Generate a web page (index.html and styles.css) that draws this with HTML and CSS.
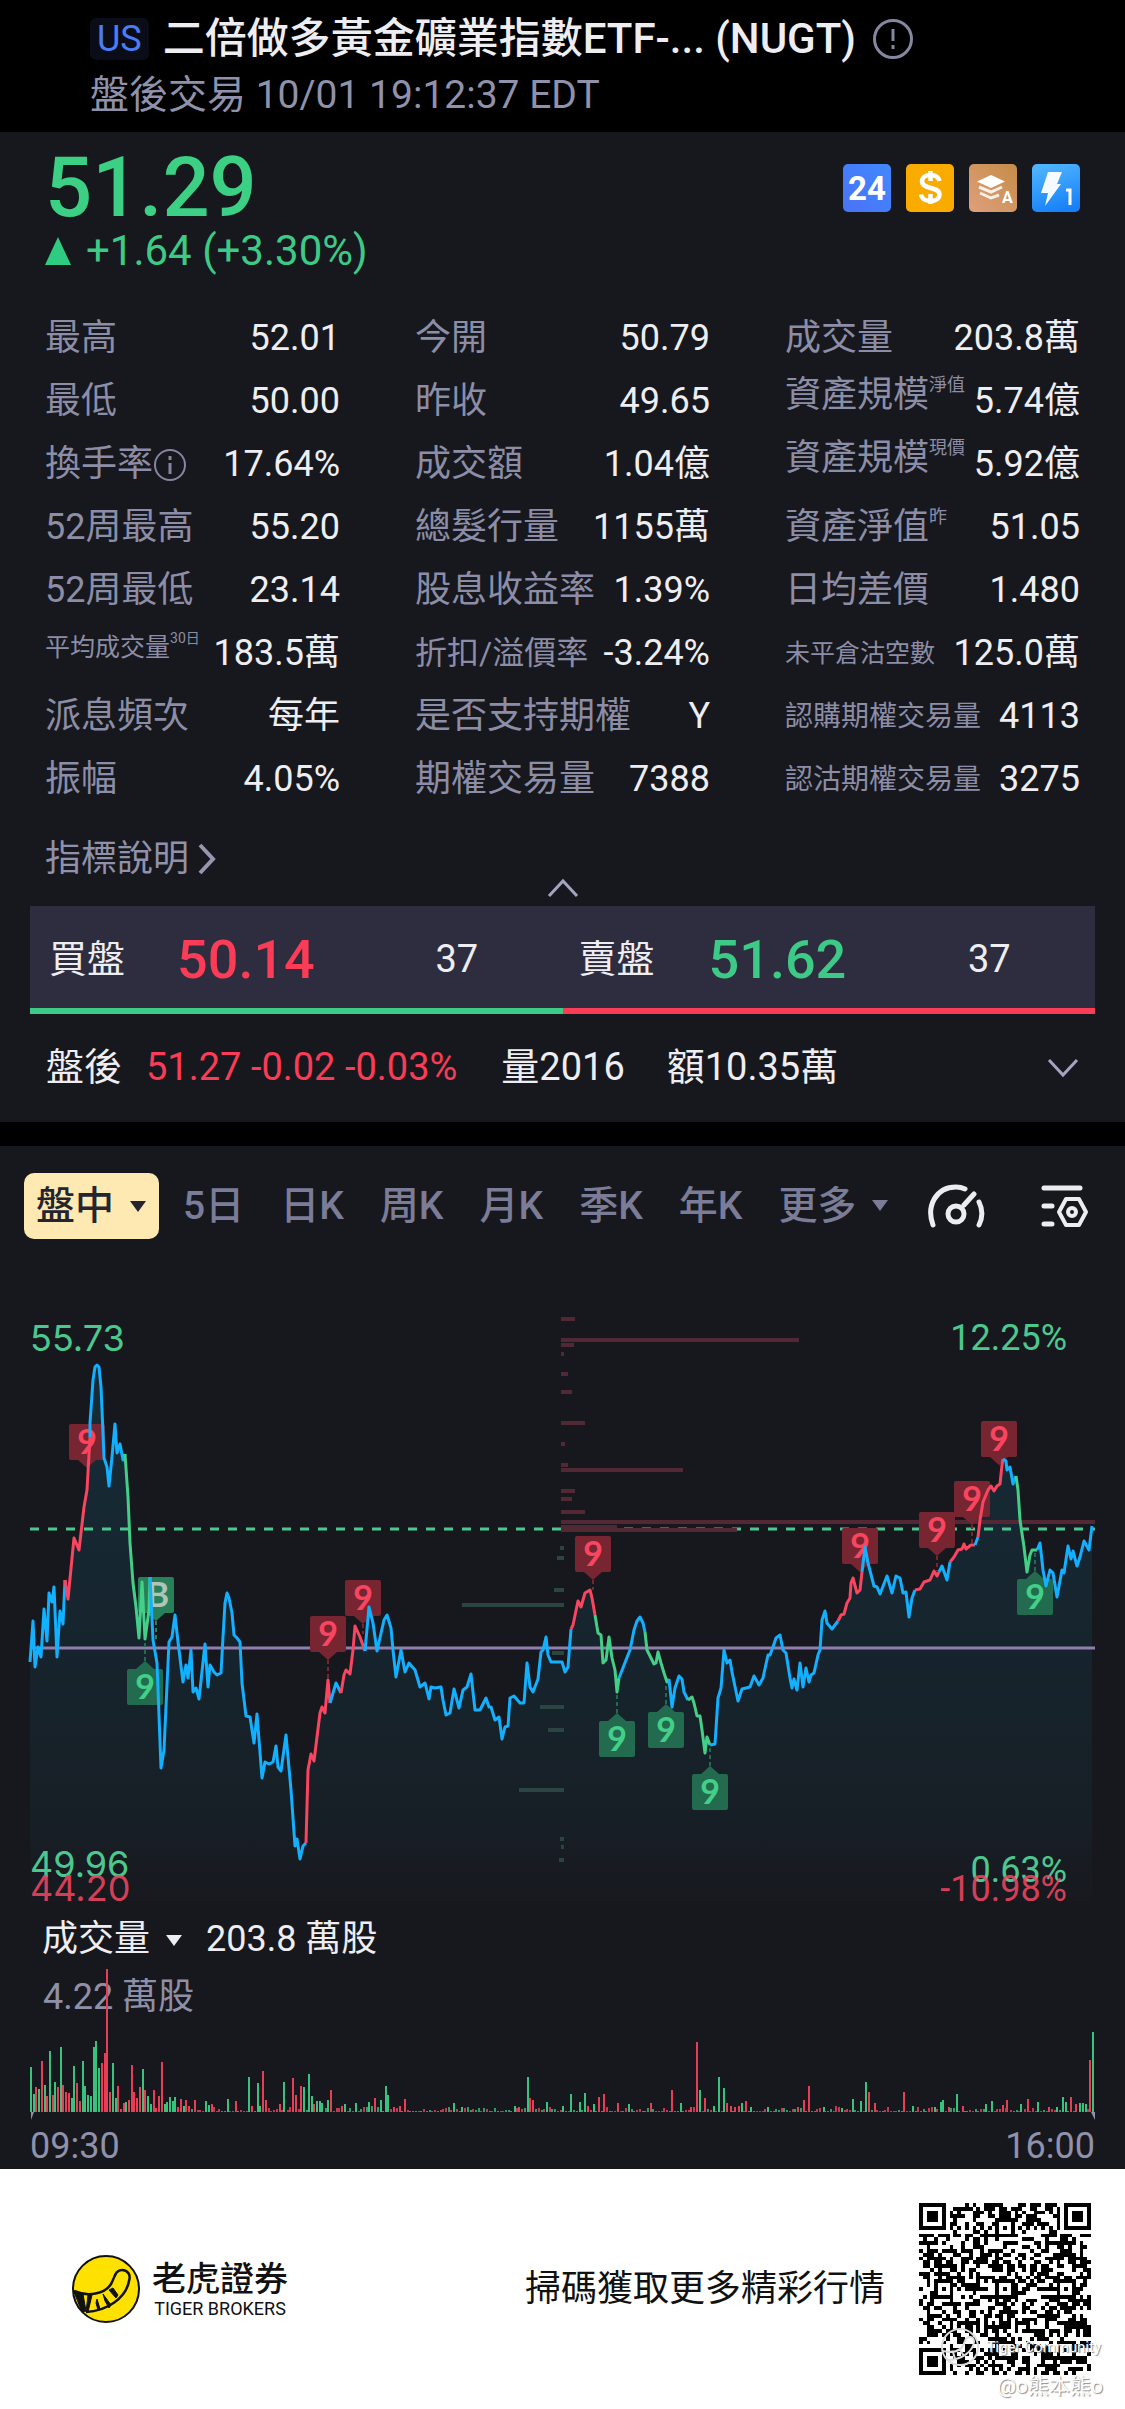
FILE: index.html
```
<!DOCTYPE html>
<html lang="zh-Hant">
<head>
    <meta charset="UTF-8">
    <meta name="viewport" content="width=device-width, initial-scale=1.0">
    <title>NUGT</title>
    <link rel="stylesheet" href="styles.css">
</head>
<body>
    <header class="header">
        <h1 class="title">
            <span class="market">US</span>
            <span>二倍做多黃金礦業指數ETF-... (NUGT)</span>
            <button class="icon-button" aria-label="提示">
                <svg width="42" height="42" viewBox="0 0 42 42" fill="none" stroke="#8586a0" stroke-width="3">
                    <circle cx="21" cy="21" r="18.5"/>
                    <path d="M21 11v12M21 27v4"/>
                </svg>
            </button>
        </h1>
        <p class="session">盤後交易 10/01 19:12:37 EDT</p>
    </header>

    <section class="panel quote">
        <div class="price-row">
            <div>
                <div class="price">51.29</div>
                <div class="change"><svg width="26" height="28" viewBox="0 0 26 28"><path d="M13 0l13 28H0z" fill="#2fcb80"/></svg>+1.64 (+3.30%)</div>
            </div>
            <div class="badges">
                <svg viewBox="0 0 48 48">
                    <defs><linearGradient id="blue" x1="1" y1="0" x2="0" y2="1"><stop offset="0" stop-color="#4089ff"/><stop offset="1" stop-color="#4a72f5"/></linearGradient></defs>
                    <rect width="48" height="48" rx="5" fill="url(#blue)"/>
                    <text x="24" y="36" font-size="33" font-weight="700" text-anchor="middle" fill="#fff">24</text>
                </svg>
                <svg viewBox="0 0 48 48">
                    <rect width="48" height="48" rx="5" fill="#f9ab00"/>
                    <path d="M33.500 17c-1-4-4.500-6-9-6-5 0-8.500 2.500-8.500 6.200 0 9 17.500 4.500 17.500 13.300 0 4-3.700 6.500-9 6.500-5 0-8.800-2.300-9.500-6.500M24.500 7v10M24.500 30v10" fill="none" stroke="#fff" stroke-width="4.500"/>
                </svg>
                <svg viewBox="0 0 48 48">
                    <defs><linearGradient id="tan" x1="1" y1="0" x2="0" y2="1"><stop offset="0" stop-color="#c58c47"/><stop offset="1" stop-color="#df9f7d"/></linearGradient></defs>
                    <rect width="48" height="48" rx="5" fill="url(#tan)"/>
                    <path d="M22 11l14 6.500L22 24 8 17.500z" fill="#fff"/>
                    <path d="M10 23l12 5 11-5M11 29l11 5 8-3" fill="none" stroke="#fff" stroke-width="3" opacity=".85"/>
                    <text x="33" y="39" font-size="16" font-weight="700" fill="#fff">A</text>
                </svg>
                <svg viewBox="0 0 48 48">
                    <defs><linearGradient id="sky" x1=".3" y1="0" x2=".6" y2="1"><stop offset="0" stop-color="#4fb4ff"/><stop offset="1" stop-color="#1680f8"/></linearGradient></defs>
                    <rect width="48" height="48" rx="5" fill="url(#sky)"/>
                    <path d="M16 8h14l-5 12h4L13 42l3-13H9z" fill="#fff" opacity=".95"/>
                    <path d="M34 26h4v15" fill="none" stroke="#fff" stroke-width="3"/>
                </svg>
            </div>
        </div>

        <div class="stats">
            <dl>
                <div><dt>最高</dt><dd>52.01</dd></div>
                <div><dt>最低</dt><dd>50.00</dd></div>
                <div><dt>換手率<svg class="info" viewBox="0 0 34 34" fill="none" stroke="#8586a0" stroke-width="2"><circle cx="17" cy="17" r="15"/><path d="M17 15v11M17 8v4" stroke-width="3"/></svg></dt><dd>17.64%</dd></div>
                <div><dt>52周最高</dt><dd>55.20</dd></div>
                <div><dt>52周最低</dt><dd>23.14</dd></div>
                <div><dt class="small raised">平均成交量<sup class="tiny">30日</sup></dt><dd>183.5萬</dd></div>
                <div><dt>派息頻次</dt><dd>每年</dd></div>
                <div><dt>振幅</dt><dd>4.05%</dd></div>
            </dl>
            <dl>
                <div><dt>今開</dt><dd>50.79</dd></div>
                <div><dt>昨收</dt><dd>49.65</dd></div>
                <div><dt>成交額</dt><dd>1.04億</dd></div>
                <div><dt>總髮行量</dt><dd>1155萬</dd></div>
                <div><dt>股息收益率</dt><dd>1.39%</dd></div>
                <div><dt class="large">折扣/溢價率</dt><dd>-3.24%</dd></div>
                <div><dt>是否支持期權</dt><dd>Y</dd></div>
                <div><dt>期權交易量</dt><dd>7388</dd></div>
            </dl>
            <dl>
                <div><dt>成交量</dt><dd>203.8萬</dd></div>
                <div><dt class="raised">資產規模<sup>淨值</sup></dt><dd>5.74億</dd></div>
                <div><dt class="raised">資產規模<sup>現價</sup></dt><dd>5.92億</dd></div>
                <div><dt>資產淨值<sup>昨</sup></dt><dd>51.05</dd></div>
                <div><dt>日均差價</dt><dd>1.480</dd></div>
                <div><dt class="small">未平倉沽空數</dt><dd>125.0萬</dd></div>
                <div><dt class="medium">認購期權交易量</dt><dd>4113</dd></div>
                <div><dt class="medium">認沽期權交易量</dt><dd>3275</dd></div>
            </dl>
        </div>

        <a class="explain" href="#">指標說明<svg width="20" height="32" viewBox="0 0 20 32" fill="none" stroke="#9697ae" stroke-width="4"><path d="M3 2l13 14L3 30"/></svg></a>
        <button class="icon-button collapse" aria-label="收起">
            <svg width="32" height="20" viewBox="0 0 32 20" fill="none" stroke="#a3a4c0" stroke-width="3"><path d="M2 18L16 3l14 15"/></svg>
        </button>

        <div class="book">
            <div class="side buy"><span>買盤</span><strong class="red">50.14</strong><span>37</span></div>
            <div class="side sell"><span>賣盤</span><strong class="green">51.62</strong><span>37</span></div>
        </div>

        <div class="after">
            <span>盤後</span>
            <span class="red">51.27 -0.02 -0.03%</span>
            <span class="volume">量2016</span>
            <span>額10.35萬</span>
            <button class="icon-button expand" aria-label="展開">
                <svg width="32" height="20" viewBox="0 0 32 20" fill="none" stroke="#a3a4c0" stroke-width="3"><path d="M2 2l14 15L30 2"/></svg>
            </button>
        </div>
    </section>

    <section class="panel">
        <nav class="tabs">
            <button class="tab active">盤中<i class="caret"></i></button>
            <button class="tab">5日</button>
            <button class="tab">日K</button>
            <button class="tab">周K</button>
            <button class="tab">月K</button>
            <button class="tab">季K</button>
            <button class="tab">年K</button>
            <button class="tab">更多<i class="caret"></i></button>
            <button class="icon-button gauge" aria-label="儀表">
                <svg width="58" height="44" viewBox="0 0 58 44" fill="none" stroke="#ecedf0" stroke-width="5" stroke-linecap="round">
                    <path d="M6 41C-1 22 9 3 29 3c4 0 7 1 9 2M52 18c4 8 4 15 0 23M37 21l10-11"/>
                    <circle cx="29" cy="30" r="8"/>
                </svg>
            </button>
            <button class="icon-button" aria-label="設定">
                <svg width="48" height="44" viewBox="0 0 48 44" fill="none" stroke="#ecedf0" stroke-width="4" stroke-linecap="round" stroke-linejoin="round">
                    <path d="M3 4h36M3 22h8M3 40h8" stroke-width="5"/>
                    <path d="M25 15h13l7 13-7 13H25l-7-13z"/>
                    <circle cx="31" cy="28" r="4"/>
                </svg>
            </button>
        </nav>

        <svg class="chart" viewBox="0 0 1125 620">
            <defs>
                <linearGradient id="area" gradientUnits="userSpaceOnUse" x1="0" y1="75" x2="0" y2="612">
                    <stop offset="0" stop-color="#162c38"/>
                    <stop offset=".85" stop-color="#171f26"/>
                    <stop offset="1" stop-color="#17191e"/>
                </linearGradient>
            </defs>
            <path id="fill" fill="url(#area)"/>
            <path d="M30 358H1095" stroke="#8f7eae" stroke-width="3"/>
            <path d="M30 239H1095" stroke="#4cc88f" stroke-width="3" stroke-dasharray="9 9"/>
            <g id="profile"></g>
            <g id="pins"></g>
            <g id="lines" fill="none" stroke-width="3" stroke-linejoin="round"></g>
            <g class="scale">
                <g fill="#4cc88f">
                    <text class="amount" x="30" y="61">55.73</text>
                    <text x="1067" y="60" text-anchor="end">12.25%</text>
                    <text class="amount" x="30" y="587">49.96</text>
                    <text x="1067" y="592" text-anchor="end">0.63%</text>
                </g>
                <g fill="#f04560" fill-opacity=".9">
                    <text class="amount" x="30" y="611">44.20</text>
                    <text x="1067" y="611" text-anchor="end">-10.98%</text>
                </g>
            </g>
        </svg>

        <div class="volume-head">
            <button class="indicator">成交量<i class="caret"></i></button>
            <span>203.8 萬股</span>
        </div>
        <svg class="chart" viewBox="0 0 1125 160">
            <text x="43" y="49" font-size="36" fill="#8f90a8">4.22 萬股</text>
            <g id="volume"></g>
            <path d="M31 152v8l3-8zM1091 152l4 8v-8z" fill="#8f90a8"/>
        </svg>
        <div class="times"><span>09:30</span><span>16:00</span></div>
    </section>

    <footer class="footer">
        <svg class="logo" viewBox="0 0 68 68">
            <defs><clipPath id="disc"><circle cx="34" cy="34" r="33"/></clipPath></defs>
            <circle cx="34" cy="34" r="33" fill="#ffe100"/>
            <g clip-path="url(#disc)" fill="none" stroke="#111" stroke-width="2.500">
                <path d="M2 36c14 6 31 3 37-7 4-7 4-14 11-14 6 0 9 5 7 11-3 17-22 30-43 31"/>
                <path d="M2 37l9 2 3 17-4 1zM20 40l-4 17h-2l2-17zM25 44l3 10-2 1-2-7zM31 39l8 11-2 3-4-7zM37 35l7 8 2-3-5-7z" fill="#111" stroke-width="1"/>
            </g>
            <circle cx="34" cy="34" r="33" fill="none" stroke="#111" stroke-width="2"/>
        </svg>
        <div class="brand"><strong>老虎證券</strong><span>TIGER BROKERS</span></div>
        <p class="scan">掃碼獲取更多精彩行情</p>
        <div class="qr">
            <svg viewBox="0 0 45 45" shape-rendering="crispEdges"><path id="qr" fill="#000"/></svg>
            <div class="mark community">
                <svg width="40" height="40" viewBox="0 0 40 40" fill="none" stroke="#ddd" stroke-width="2"><circle cx="20" cy="20" r="18"/><path d="M3 24c14 3 20-2 22-10 2-6 9-5 9 1-1 9-12 18-26 18M13 25l2 7M20 23l4 6"/></svg>
                Tiger Community
            </div>
            <div class="mark user">@o熊本熊o</div>
        </div>
    </footer>
    <script src="chart.js"></script>
</body>
</html>
```
FILE: styles.css
```
* {
    box-sizing: border-box;
}
body {
    font-family: Roboto, "Noto Sans CJK TC", sans-serif;
    font-size: 36px;
    line-height: 1.2;
    margin: 0;
    background-color: #000;
    color: #eeeef2;
}
h1, p, dl, dd {
    margin: 0;
}
button {
    font: inherit;
    color: inherit;
    background: none;
    border: none;
    padding: 0;
    cursor: pointer;
}
svg {
    display: block;
    flex-shrink: 0;
}
.red {
    color: #fa3c57;
}
.green {
    color: #3dca86;
}
.header {
    height: 132px;
    padding: 9px 90px 0;
}
.title {
    display: flex;
    align-items: center;
    font-size: 42px;
    font-weight: 500;
    line-height: 60px;
    white-space: nowrap;
}
.market {
    font-size: 36px;
    font-weight: 400;
    line-height: 42px;
    color: #4a7df5;
    background-color: #0a0d18;
    border-radius: 6px;
    padding: 0 7px;
    margin-right: 14px;
}
.title .icon-button {
    margin-left: 16px;
}
.session {
    font-size: 39px;
    line-height: 52px;
    color: #9091aa;
}
.panel {
    background-color: #17181d;
}
.quote {
    padding: 18px 30px 0;
    height: 990px;
    margin-bottom: 24px;
}
.price-row {
    display: flex;
    justify-content: space-between;
    padding: 0 15px;
}
.price {
    font-size: 83px;
    font-weight: 500;
    line-height: 76px;
    color: #3bd084;
}
.change {
    display: flex;
    align-items: center;
    gap: 15px;
    font-size: 42px;
    line-height: 50px;
    color: #3dca86;
}
.badges {
    display: flex;
    gap: 15px;
    padding-top: 14px;
}
.badges svg {
    width: 48px;
    height: 48px;
}
.stats {
    display: grid;
    grid-template-columns: repeat(3, 1fr);
    gap: 75px;
    padding: 31px 15px 0;
}
.stats dl > div {
    display: flex;
    align-items: center;
    justify-content: space-between;
    height: 63px;
    white-space: nowrap;
}
.stats dt {
    display: flex;
    align-items: center;
    color: #8c8da6;
}
.stats dt.large {
    font-size: 32px;
}
.stats dt.medium {
    font-size: 28px;
}
.stats dt.small {
    font-size: 25px;
}
.stats dt.raised {
    padding-bottom: 12px;
}
.stats sup {
    font-size: 18px;
    line-height: 18px;
    align-self: flex-start;
    padding-top: 2px;
}
.stats sup.tiny {
    font-size: 14px;
    padding-top: 0;
    line-height: 10px;
}
.info {
    width: 34px;
    height: 34px;
}
.explain {
    display: flex;
    align-items: center;
    gap: 8px;
    margin: 23px 15px 0;
    line-height: 50px;
    color: #9091aa;
    text-decoration: none;
}
.collapse {
    display: block;
    margin: -6px auto 8px;
}
.book {
    display: grid;
    grid-template-columns: 1fr 1fr;
}
.side {
    display: grid;
    grid-template-columns: 128px 1fr 127px;
    align-items: center;
    height: 108px;
    padding: 6px 0 0 19px;
    font-size: 38px;
    background-color: #2d2d3f;
    border-bottom: 6px solid #3dca86;
}
.side.sell {
    padding-left: 16px;
    grid-template-columns: 130px 1fr 127px;
    border-color: #fa3c57;
}
.side strong {
    font-size: 54px;
    font-weight: 500;
}
.after {
    display: flex;
    align-items: center;
    height: 108px;
    padding: 0 16px;
    font-size: 38px;
    white-space: nowrap;
}
.after .red {
    margin: 0 44px 0 24px;
}
.after .volume {
    margin-right: 42px;
}
.expand {
    margin-left: auto;
}
.tabs {
    display: flex;
    align-items: center;
    gap: 36px;
    height: 144px;
    padding: 0 36px 24px 24px;
}
.tab {
    display: flex;
    align-items: center;
    gap: 16px;
    font-size: 39px;
    font-weight: 500;
    color: #7b7c98;
    white-space: nowrap;
}
.tab.active {
    height: 66px;
    padding: 0 13px 0 12px;
    margin-right: -12px;
    color: #24252f;
    background-color: #ffe9b3;
    border-radius: 10px;
}
.caret {
    border: 8px solid transparent;
    border-top: 11px solid currentColor;
    border-bottom: 0;
}
.gauge {
    margin-left: auto;
    margin-right: 20px;
}
.chart {
    width: 100%;
    height: auto;
}
.scale {
    font-size: 36px;
}
.amount {
    font-family: Inter, sans-serif;
    font-size: 36px;
}
.pin {
    font-family: Lato, sans-serif;
    font-size: 34px;
    font-weight: 700;
    text-anchor: middle;
}
.volume-head {
    display: flex;
    align-items: center;
    gap: 24px;
    height: 50px;
    padding: 10px 42px 0;
}
.indicator {
    display: flex;
    align-items: center;
    gap: 16px;
}
.times {
    display: flex;
    justify-content: space-between;
    padding: 3px 30px 0;
    line-height: 46px;
    color: #9091aa;
}
.footer {
    display: flex;
    align-items: center;
    height: 240px;
    padding: 0 34px 0 72px;
    background-color: #fff;
    color: #111;
}
.logo {
    width: 68px;
    height: 68px;
}
.brand {
    display: flex;
    flex-direction: column;
    align-items: center;
    padding-left: 12px;
    font-size: 18px;
    line-height: 20px;
}
.brand strong {
    font-size: 34px;
    font-weight: 500;
    line-height: 40px;
}
.scan {
    margin: 0 34px 0 auto;
    line-height: 48px;
}
.qr {
    position: relative;
    width: 172px;
    height: 172px;
}
.mark {
    position: absolute;
    display: flex;
    align-items: center;
    gap: 6px;
    font-size: 15px;
    color: #fff;
    text-shadow: 1px 1px 1px #888;
    white-space: nowrap;
}
.community {
    right: -10px;
    bottom: 8px;
}
.user {
    right: -12px;
    bottom: -24px;
    font-size: 21px;
}
```
FILE: chart.js
```
const NS = 'http://www.w3.org/2000/svg';
const RED = '#f94560';
const GREEN = '#43cf87';
const BLUE = '#12b0ff';

function add(parent, tag, attrs, text) {
    const el = document.createElementNS(NS, tag);
    for (const key in attrs) el.setAttribute(key, attrs[key]);
    if (text) el.textContent = text;
    document.getElementById(parent).appendChild(el);
}

// price line, one entry for each coloured run
const runs = [
    [BLUE, '30,372 33,331 35,377 38,357 41,367 44,319 47,351 49,303 52,312 54,297 57,367 60,321 63,334 65,290'],
    [RED, '65,290 68,309 74,248 79,260 84,217 87,200 90,147'],
    [BLUE, '90,147 90,133 93,90 95,77 97,75 99,77 101,97 103,143 104,168 107,177 109,196 112,167 115,134 117,163 120,154 123,170 125,164'],
    [GREEN, '125,164 128,207 130,253 133,293 136,317 139,348 142,292 145,349 149,320 150,287'],
    [BLUE, '150,287 153,350 157,373 161,478 164,460 169,352 172,347 175,325 178,352 183,392 186,375 188,388 191,360 193,402 196,398 199,409 205,354 208,397 210,375 214,382 217,385 221,383 223,347 225,313 227,303 229,308 232,323 234,345 237,348 240,352 242,393 246,426 250,427 254,453 257,424 262,488 265,472 269,474 273,472 276,456 278,477 281,481 286,445 291,500 295,556 297,549 300,569 303,556 306,553'],
    [RED, '306,553 308,480 311,464 314,471 320,423 322,417 325,423 328,390 330,413'],
    [BLUE, '330,413 336,393 341,403'],
    [RED, '341,403 344,385 346,380 350,384 353,360 355,336 360,347 365,361'],
    [BLUE, '365,361 369,317 373,333 377,361 384,330 387,325 391,338 393,360 396,387 401,360 405,382 409,373 415,380 420,397 425,393 429,409 431,397 435,398 441,397 443,410 446,425 450,423 454,399 459,418 463,400 467,397 471,384 475,420 480,420 486,408 489,417 491,417 495,430 499,427 502,449 505,437 508,436 510,408 514,406 520,413 524,413 527,373 530,397 533,402 538,389 541,362 543,360 546,347 548,365 551,372 562,372 565,382 568,377 571,339'],
    [RED, '571,339 573,335 578,311 581,317 585,303 590,300 592,308 595,325'],
    [GREEN, '595,325 598,343 601,345 603,373 606,370 609,347 612,368 615,380 617,402 619,388'],
    [BLUE, '619,388 626,370 630,360 634,340 637,331 640,327 643,333 645,342'],
    [GREEN, '645,342 647,360 654,374 656,373 658,362 661,373 664,383 667,392 669,389'],
    [BLUE, '669,389 672,417 675,398 679,386 682,389 684,402 688,410'],
    [GREEN, '688,410 692,407 694,413 697,426 700,426 702,440 705,463 707,447 710,455'],
    [BLUE, '710,455 715,454 718,408 721,398 724,360 727,373 730,370 732,382 738,411 742,399 750,397 754,386 759,395 763,388 768,365 770,365 773,357 776,348 780,345 783,360 786,363 790,388 792,398 794,389 797,400 800,373 803,397 806,378 809,392 811,385 814,383 818,365 820,360 822,330 825,321 827,333 832,339 835,335 838,331'],
    [RED, '838,331 841,325 844,324 847,313 850,308 851,293 853,288 857,303 860,300 862,282'],
    [BLUE, '862,282 865,257 868,273 874,296 877,297 880,304 887,286 892,303 896,286 900,288 903,303 906,302 909,327 912,308 915,300'],
    [RED, '915,300 920,299 924,292 930,290 934,281 937,286 939,282'],
    [BLUE, '939,282 942,276 947,290 950,272'],
    [RED, '950,272 954,267 958,260 962,259 964,254 966,259 971,255 975,255'],
    [BLUE, '975,255 978,247'],
    [RED, '978,247 980,230 983,212 988,200 991,196 994,201 997,196 1000,194 1002,175 1003,169'],
    [BLUE, '1003,169 1006,171 1007,180 1010,177 1013,194 1016,186'],
    [GREEN, '1016,186 1018,200 1020,230 1024,257 1027,282 1030,265 1032,260 1037,260'],
    [BLUE, '1037,260 1040,253 1043,280 1046,296 1050,280 1053,283 1057,307 1062,280 1064,283 1068,256 1071,269 1073,261 1077,276 1080,267 1084,251 1089,260 1092,236']
];
runs.forEach(([color, points]) => add('lines', 'polyline', { points, stroke: color }));
document.getElementById('fill').setAttribute('d', 'M30,612L' + runs.map(run => run[1]).join(' ') + ' 1092,612Z');

// volume by price: y, x1, x2
[[29, 561, 575], [50, 561, 799], [55, 561, 574], [64, 561, 564], [84, 561, 568], [102, 561, 572],
 [133, 561, 585], [154, 561, 565], [175, 561, 568], [180, 561, 683], [201, 561, 575], [209, 561, 572],
 [222, 561, 585], [232, 561, 1095], [237, 561, 617], [240, 561, 737]
].forEach(([y, x1, x2]) => add('profile', 'path', { d: `M${x1} ${y}H${x2}`, stroke: '#522834', 'stroke-width': 4 }));
[[258, 560], [268, 557], [300, 554], [315, 462], [363, 552], [417, 540], [440, 548], [500, 519], [549, 560], [557, 561], [570, 559]
].forEach(([y, x]) => add('profile', 'path', { d: `M${x} ${y}H564`, stroke: '#2a4542', 'stroke-width': 4 }));

// markers: x, top of the box, pointing down or up, length of the dotted stem
[[87, 134, 1, 0], [328, 326, 1, 20], [363, 290, 1, 10], [593, 246, 1, 10], [860, 238, 1, 0], [937, 222, 1, 15],
 [972, 191, 1, 20], [999, 131, 1, 0], [145, 379, 0, 20], [617, 431, 0, 20], [666, 422, 0, 20], [710, 484, 0, 20],
 [1035, 289, 0, 20], [156, 287, 1, 18, 'B']
].forEach(([x, y, down, stem, letter]) => {
    const red = down && !letter;
    const tip = down ? `M${x - 9} ${y + 36}l9 8 9-8z` : `M${x - 9} ${y}l9-8 9 8z`;
    const end = down ? y + 44 : y - 8;
    const color = red ? '#782532' : letter ? '#28805a' : '#226b4f';
    add('pins', 'path', { d: `M${x} ${end}V${down ? end + stem : end - stem}`, stroke: color, 'stroke-width': 2, 'stroke-dasharray': '4 3' });
    add('pins', 'path', { d: `M${x - 16} ${y}h32q2 0 2 2v32q0 2-2 2h-32q-2 0-2-2v-32q0-2 2-2z${tip}`, fill: color });
    add('pins', 'text', { class: 'pin', x: letter ? x + 2 : x, y: y + 30, fill: letter ? '#b0c4b8' : red ? RED : GREEN }, letter || '9');
});

let seed = 7;
function random() {
    seed = (seed * 16807) % 2147483647;
    return seed / 2147483647;
}

// peaks of the volume bars, quiet minutes are filled in between
const peaks = '30:45g 33:18g 35:25r 38:23g 41:51r 44:27g 46:16r 49:61g 52:17r 54:30g 57:25r 60:65g 62:27r 65:20r 68:19r 71:14g 73:46g 76:29r 79:11r 82:51g 84:26g 87:17g 90:16g 93:65g 95:71g 98:44g 101:49r 104:59r 106:143r 109:20r 112:49g 115:14g 117:26r 120:3r 123:9r 125:10g 128:12r 131:47r 133:20r 136:14r 139:25r 142:43g 144:22r 147:16g 150:8g 153:22r 155:4r 158:16r 161:50r 164:8g 166:10g 169:15g 172:11g 174:15g 177:5r 180:13r 183:6g 185:12r 188:6r 194:12r 205:11g 208:7g 211:8r 227:13g 235:11r 248:35g 251:6r 257:29g 259:6g 262:41r 265:12r 279:8r 283:30g 292:34r 295:17r 300:26r 303:25g 308:38g 311:16g 313:8r 316:11g 319:11g 321:9g 327:12g 330:22r 341:6r 344:8g 355:9g 368:10g 374:14r 380:12g 385:26g 387:17g 393:5r 399:6r 404:13r 453:9g 461:5g 514:6g 518:5r 527:35g 529:14r 532:12r 546:10g 562:6g 570:18g 579:10g 584:19g 587:6r 593:8g 598:15r 603:18r 617:9r 628:8g 650:9r 671:22r 680:9g 690:5r 696:70r 699:22g 704:14r 713:6g 718:35g 723:24g 726:9r 730:6r 734:5r 738:6r 741:9g 745:11r 750:5g 767:5g 797:5r 803:12r 808:26r 823:5g 841:4g 852:13g 860:11g 865:30g 868:20r 874:9r 903:20r 912:6g 934:5g 940:10g 942:12g 948:5r 956:18g 962:6r 985:8g 991:11g 1002:7r 1006:12r 1020:8g 1027:13r 1037:10g 1048:5r 1056:5g 1062:15g 1065:10g 1070:15r 1075:8r 1079:9g 1082:9g 1085:8g 1089:52r 1092:80g';
const used = {};
peaks.split(' ').forEach(item => {
    const [x, value] = item.split(':');
    const height = parseInt(value);
    used[Math.round((x - 30) / 2.73)] = true;
    add('volume', 'rect', { x, y: 152 - height, width: 2, height, fill: value.endsWith('r') ? '#e63e55' : '#38c27e' });
});
for (let i = 0; i < 390; i++) {
    const height = 1 + Math.floor(random() * random() * 6);
    const red = random() > .45;
    if (!used[i]) add('volume', 'rect', { x: Math.round(30 + i * 2.73), y: 152 - height, width: 2, height, fill: red ? '#c4394f' : '#319c6b' });
}

// QR code, 45 modules a side
function ring(dx, dy, size) {
    const d = Math.max(Math.abs(dx), Math.abs(dy));
    return size === 4 ? d === 3 || d < 2 : d !== 1;
}
function dark(x, y) {
    for (const [cx, cy] of [[3, 3], [41, 3], [3, 41]]) {
        if (Math.abs(x - cx) < 5 && Math.abs(y - cy) < 5) return ring(x - cx, y - cy, 4);
    }
    for (const [cx, cy] of [[22, 6], [6, 22], [22, 22], [38, 22], [22, 38], [38, 38]]) {
        if (Math.abs(x - cx) < 3 && Math.abs(y - cy) < 3) return ring(x - cx, y - cy, 2);
    }
    if (x === 6 || y === 6) return (x + y) % 2 === 0;
    return random() > .5;
}
let modules = '';
for (let y = 0; y < 45; y++) {
    for (let x = 0; x < 45; x++) {
        if (dark(x, y)) modules += `M${x} ${y}h1v1h-1z`;
    }
}
document.getElementById('qr').setAttribute('d', modules);
```
